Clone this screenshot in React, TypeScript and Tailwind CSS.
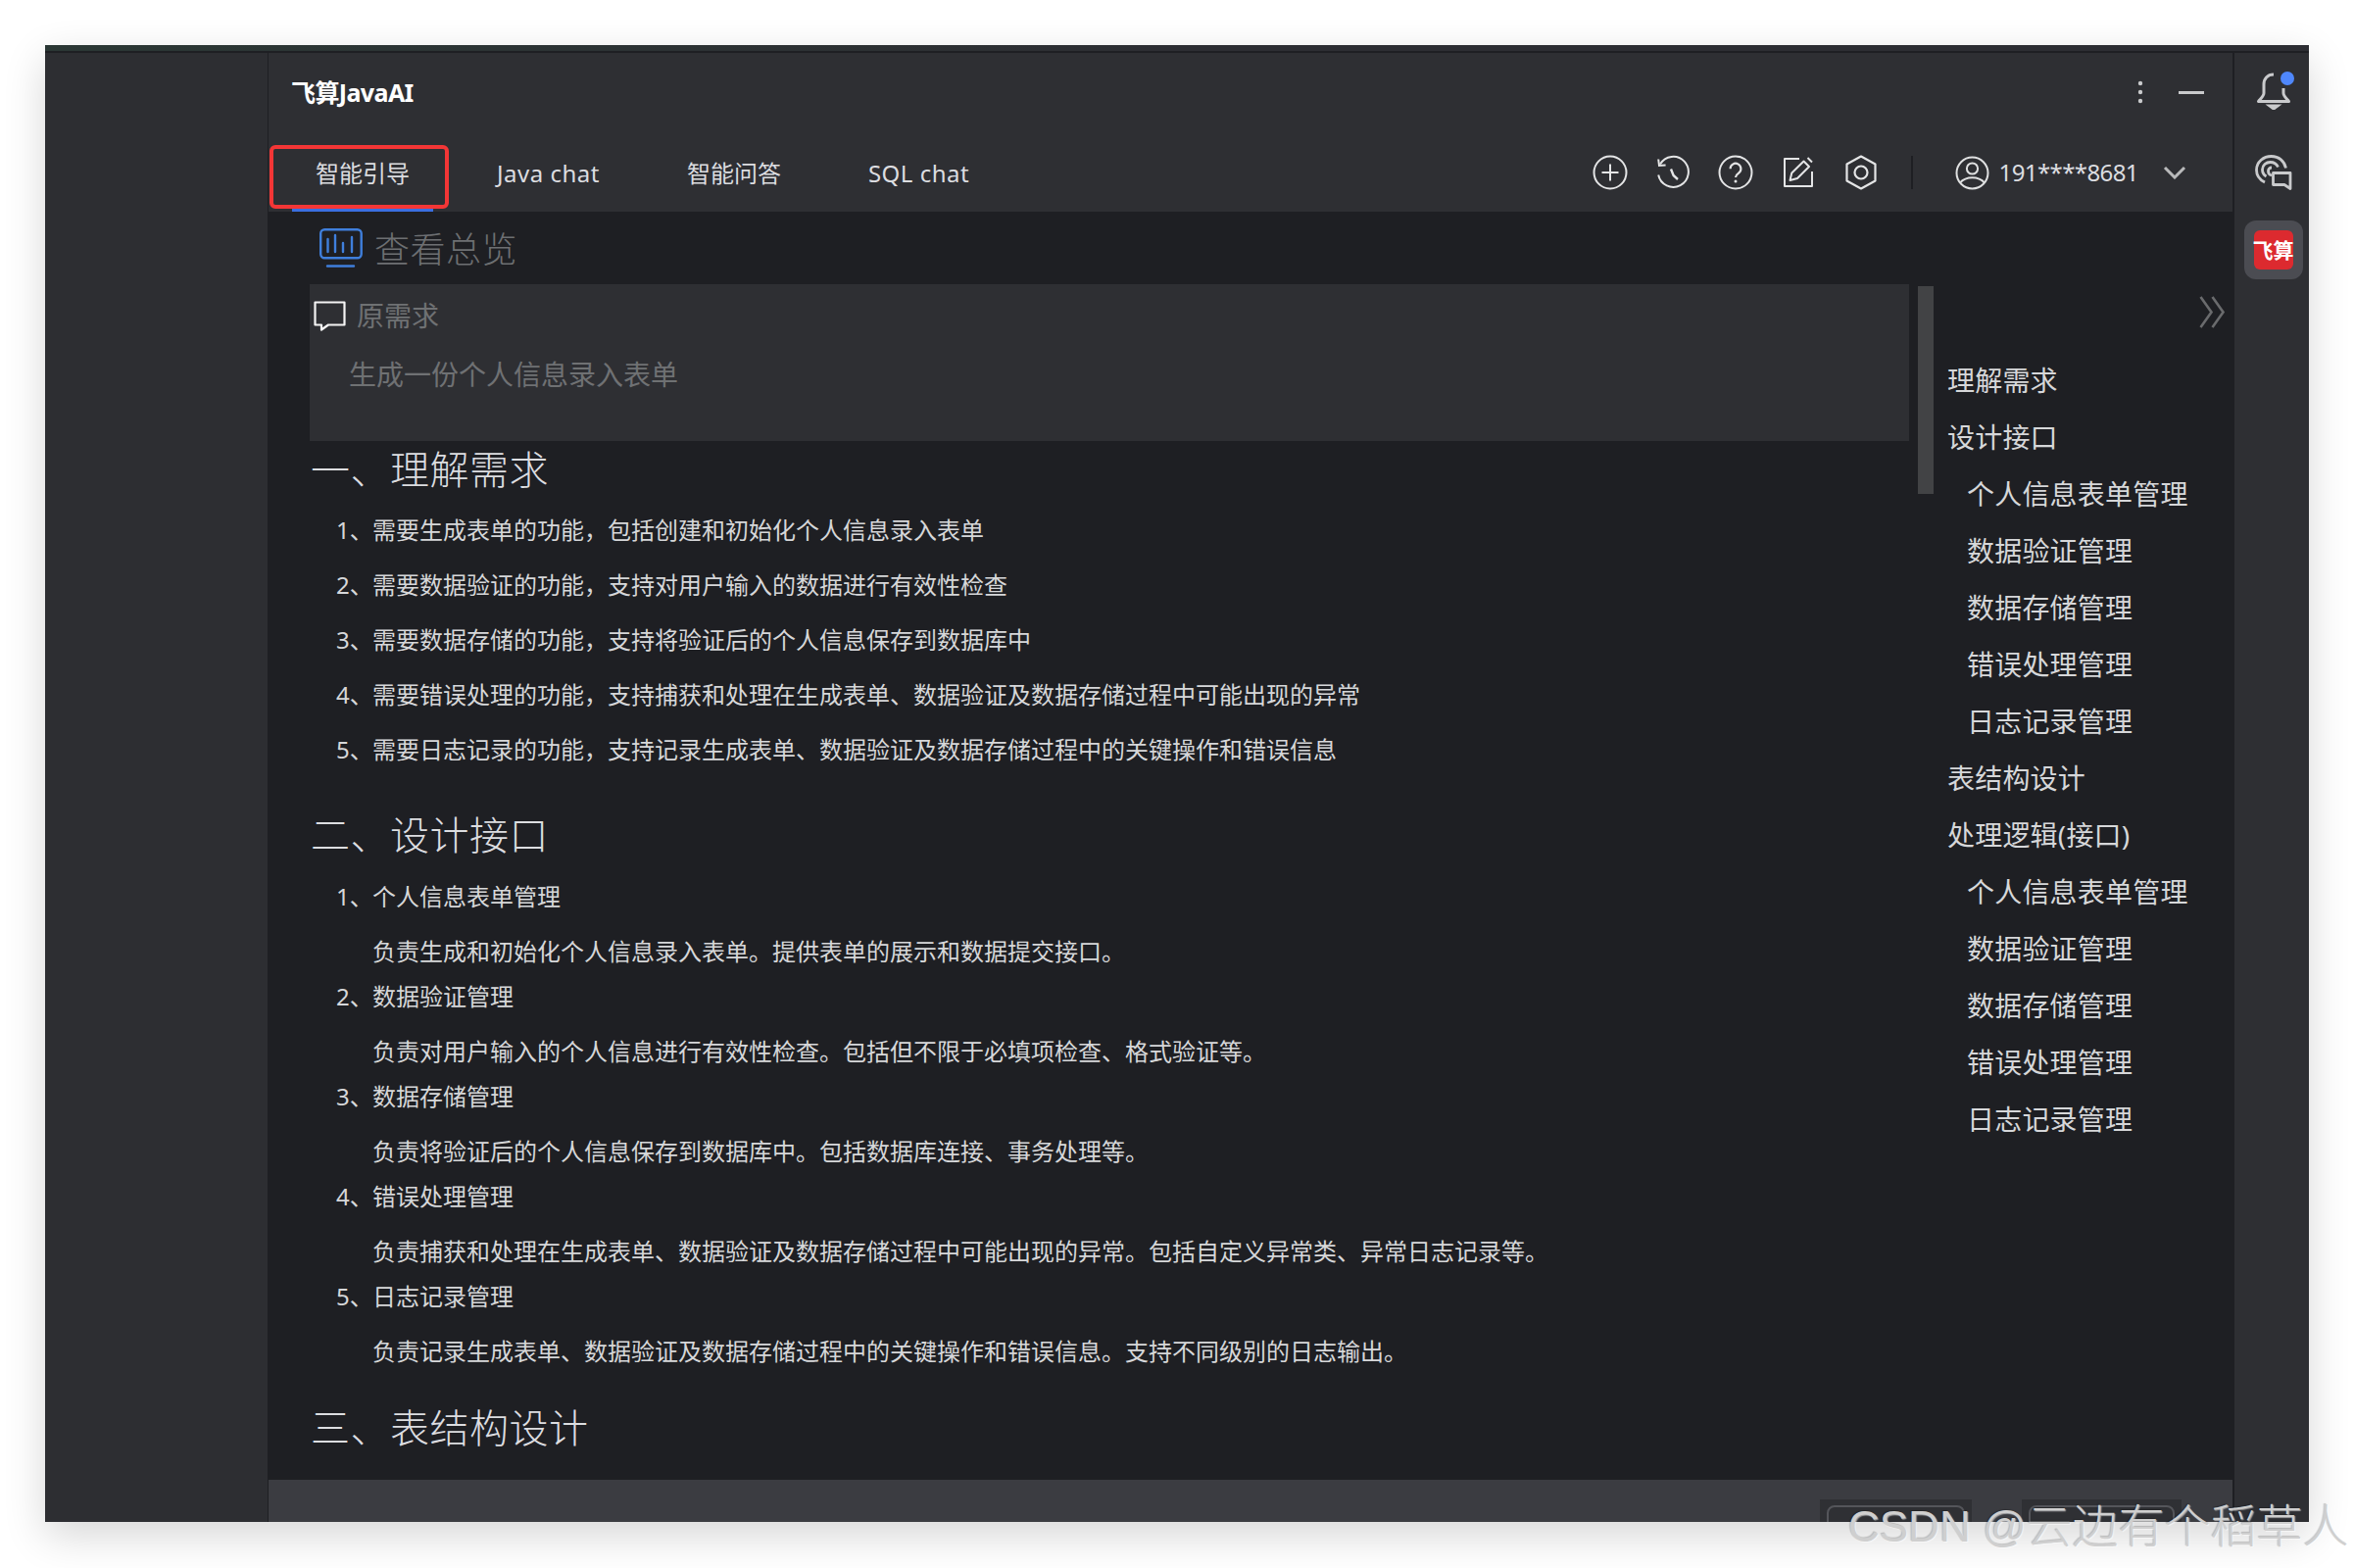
import React from "react";

const sans = "font-['Noto_Sans','Noto_Sans_CJK_SC',sans-serif]";

const listOne = [
  "需要生成表单的功能，包括创建和初始化个人信息录入表单",
  "需要数据验证的功能，支持对用户输入的数据进行有效性检查",
  "需要数据存储的功能，支持将验证后的个人信息保存到数据库中",
  "需要错误处理的功能，支持捕获和处理在生成表单、数据验证及数据存储过程中可能出现的异常",
  "需要日志记录的功能，支持记录生成表单、数据验证及数据存储过程中的关键操作和错误信息",
];

const listTwo = [
  ["个人信息表单管理", "负责生成和初始化个人信息录入表单。提供表单的展示和数据提交接口。"],
  ["数据验证管理", "负责对用户输入的个人信息进行有效性检查。包括但不限于必填项检查、格式验证等。"],
  ["数据存储管理", "负责将验证后的个人信息保存到数据库中。包括数据库连接、事务处理等。"],
  ["错误处理管理", "负责捕获和处理在生成表单、数据验证及数据存储过程中可能出现的异常。包括自定义异常类、异常日志记录等。"],
  ["日志记录管理", "负责记录生成表单、数据验证及数据存储过程中的关键操作和错误信息。支持不同级别的日志输出。"],
];

const outline: [string, number][] = [
  ["理解需求", 1],
  ["设计接口", 1],
  ["个人信息表单管理", 2],
  ["数据验证管理", 2],
  ["数据存储管理", 2],
  ["错误处理管理", 2],
  ["日志记录管理", 2],
  ["表结构设计", 1],
  ["处理逻辑(接口)", 1],
  ["个人信息表单管理", 2],
  ["数据验证管理", 2],
  ["数据存储管理", 2],
  ["错误处理管理", 2],
  ["日志记录管理", 2],
];

function Tab({ label, latin }: { label: string; latin?: boolean }) {
  return (
    <div className={latin ? "px-6 h-[68px] flex items-center text-[24px] text-[#dcdde0] pb-[10px] whitespace-nowrap tracking-[0.5px]" : "px-6 h-[68px] flex items-center text-[24px] text-[#dcdde0] pb-[10px] whitespace-nowrap"}>
      {label}
    </div>
  );
}

function HeaderIcons() {
  return (
    <div className="flex items-center text-[#e4e5e6]">
      <div className="w-16 flex justify-center">
        <svg width="36" height="36" viewBox="0 0 36 36" fill="none" stroke="currentColor" strokeWidth="2">
          <circle cx="18" cy="18" r="16.5" />
          <path d="M18 9.5v17M9.5 18h17" />
        </svg>
      </div>
      <div className="w-16 flex justify-center">
        <svg width="36" height="36" viewBox="0 0 36 36" fill="none" stroke="currentColor" strokeWidth="2">
          <path d="M5 9.5 A15.5 15.5 0 1 1 3.2 20.5" />
          <path d="M3.2 4.5 L4 11 L10.6 10.4" />
          <path d="M16 14.5 L18.6 21 L23 25" strokeWidth="2.4" />
        </svg>
      </div>
      <div className="w-16 flex justify-center">
        <svg width="36" height="36" viewBox="0 0 36 36" fill="none" stroke="currentColor" strokeWidth="2">
          <circle cx="18" cy="18" r="16.5" />
          <path d="M12.6 14.2a5.4 5.4 0 1 1 8.5 4.4c-2 1.4-3.1 2.2-3.1 4.4" strokeWidth="2.2" />
          <circle cx="18" cy="27" r="1.5" fill="currentColor" stroke="none" />
        </svg>
      </div>
      <div className="w-16 flex justify-center">
        <svg width="32" height="32" viewBox="0 0 32 32" fill="none" stroke="currentColor" strokeWidth="2">
          <path d="M17 2H2v28h28V15" strokeLinejoin="round" />
          <path d="M7.5 24l1.8-7.5L21.5 4.5l5.5 5.5L15 22z" strokeLinejoin="round" />
          <path d="M25.5 1l4.5 4.5" />
        </svg>
      </div>
      <div className="w-16 flex justify-center">
        <svg width="32" height="36" viewBox="0 0 32 36" fill="none" stroke="currentColor" strokeWidth="2.2">
          <path d="M16 1.5 30.5 9.5v17L16 34.5 1.5 26.5v-17z" strokeLinejoin="round" />
          <circle cx="16" cy="18" r="6.5" />
        </svg>
      </div>
    </div>
  );
}

function Bullet({ n, text }: { n: number; text: string }) {
  return (
    <div className="flex items-center h-full pb-[3px]">
      <span className="w-[37px] shrink-0 whitespace-nowrap">{n}、</span>
      <span className="whitespace-nowrap">{text}</span>
    </div>
  );
}

export default function App() {
  return (
    <div className={`relative w-[2402px] h-[1600px] bg-white pt-[46px] pl-[46px] overflow-hidden ${sans}`}>
      <div className="w-[2310px] h-[1507px] flex flex-col overflow-hidden shadow-[0_14px_40px_rgba(0,0,0,0.16)] bg-[#2d2e32]">
        <div className="h-[6px] shrink-0 bg-gradient-to-r from-[#2b3835] via-[#2d2e33] to-[#2d2e33]" />
        <div className="h-[2px] shrink-0 bg-[#1e1f23]" />
        <div className="flex flex-1 min-h-0">
          {/* left empty sidebar */}
          <div className="w-[227px] shrink-0 bg-[#2d2e32]" />
          <div className="w-[1px] shrink-0 bg-[#1e1f23]" />

          {/* main */}
          <div className="flex flex-col w-[2004px] shrink-0 min-w-0">
            <div className="h-[162px] shrink-0 bg-[#2e2f33] flex flex-col">
              <div className="h-[94px] flex items-start justify-between pl-[23px] pr-[29px]">
                <div className="mt-[23px] h-[36px] flex items-center text-[25px] font-bold text-white tracking-[-0.6px] whitespace-nowrap">飞算JavaAI</div>
                <div className="flex items-center mt-[28px] gap-[36px]">
                  <svg width="6" height="24" viewBox="0 0 6 24" fill="#c9cacc">
                    <circle cx="3" cy="3" r="2.2" />
                    <circle cx="3" cy="12" r="2.2" />
                    <circle cx="3" cy="21" r="2.2" />
                  </svg>
                  <div className="w-[26px] h-[3px] bg-[#c9cacc]" />
                </div>
              </div>
              <div className="flex-1 flex items-start justify-between">
                <div className="flex gap-[41px] ml-[24px]">
                  <div className="relative">
                    <Tab label="智能引导" />
                    <div className="absolute left-0 right-0 bottom-0 h-[4px] bg-[#3a6fe0]" />
                  </div>
                  <Tab label="Java chat" latin />
                  <Tab label="智能问答" />
                  <Tab label="SQL chat" latin />
                </div>
                <div className="flex items-center mt-[10px] h-[36px] pr-[47px]">
                  <HeaderIcons />
                  <div className="w-[2px] h-[34px] bg-[#1e1f23] ml-[19px] mr-[43px]" />
                  <svg width="35" height="35" viewBox="0 0 35 35" fill="none" stroke="#dfe0e1" strokeWidth="2" className="shrink-0">
                    <circle cx="17.5" cy="17.5" r="16" />
                    <circle cx="17.5" cy="13" r="5.6" />
                    <path d="M5 27.5c3.2-3.6 7.5-5.2 12.5-5.2s9.300 1.600 12.500 5.200" />
                  </svg>
                  <span className="ml-[10px] text-[24px] text-[#dcdde0] tracking-[-0.6px] whitespace-nowrap">191****8681</span>
                  <svg width="24" height="14" viewBox="0 0 24 14" fill="none" stroke="#b9babb" strokeWidth="3" className="ml-[25px] shrink-0">
                    <path d="M2 2l10 10L22 2" />
                  </svg>
                </div>
              </div>
            </div>

            <div className="flex flex-1 min-h-0 bg-[#1e1f23]">
              <div className="w-[1684px] shrink-0 pl-[42px] flex flex-col text-[24px] text-[#d6d7d9]">
                <div className="h-[74px] shrink-0 flex items-center pl-[10px]">
                  <svg width="44" height="40" viewBox="0 0 44 40" fill="none" stroke="#3f7fdc" strokeWidth="2.4" className="shrink-0">
                    <rect x="1.200" y="1.200" width="41.500" height="29" rx="4" />
                    <path d="M8.500 11v13M16 7v17M24 15v9M33 9v15M8 38.500h27" strokeLinecap="round" />
                  </svg>
                  <span className="ml-[12px] pt-[3px] text-[36px] tracking-[0.5px] text-[#6d6f72] font-light whitespace-nowrap">查看总览</span>
                </div>

                <div className="w-[1632px] h-[160px] shrink-0 bg-[#2e2f33] flex flex-col text-[#6f7173] text-[28px]">
                  <div className="flex items-center h-[66px] pl-[4px]">
                    <svg width="33" height="31" viewBox="0 0 33 31" fill="none" stroke="#f4f4f4" strokeWidth="2.200" className="shrink-0 mb-[2px]" strokeLinejoin="round">
                      <path d="M1.500 1.500h30v23H15L8 29.500v-5H1.500z" />
                    </svg>
                    <span className="ml-[11px] pb-[3px] whitespace-nowrap text-[#6f7173]">原需求</span>
                  </div>
                  <div className="pl-[40px] h-[54px] pb-[3px] flex items-center whitespace-nowrap">生成一份个人信息录入表单</div>
                </div>

                <div className="h-[64px] shrink-0 pb-[6px] flex items-center text-[40px] tracking-[0.5px] text-[#dcdde0] font-light pl-[1px] whitespace-nowrap">一、理解需求</div>

                <div className="flex flex-col pl-[27px]">
                  {listOne.map((t, i) => (
                    <div key={i} className="h-[56px]">
                      <Bullet n={i + 1} text={t} />
                    </div>
                  ))}
                </div>

                <div className="h-[104px] shrink-0 pt-[12px] flex items-center text-[40px] tracking-[0.5px] text-[#dcdde0] font-light pl-[1px] whitespace-nowrap">二、设计接口</div>

                <div className="flex flex-col pl-[27px]">
                  {listTwo.map(([h, d], i) => (
                    <div key={i}>
                      <div className="h-[36px]">
                        <Bullet n={i + 1} text={h} />
                      </div>
                      <div className="h-[66px] pt-[7px] pl-[37px] flex items-center whitespace-nowrap">{d}</div>
                    </div>
                  ))}
                </div>

                <div className="h-[98px] shrink-0 pb-[1px] flex items-center text-[40px] tracking-[0.5px] text-[#dcdde0] font-light pl-[1px] whitespace-nowrap">三、表结构设计</div>
              </div>

              <div className="w-[16px] h-[212px] mt-[76px] shrink-0 ml-[-1px] bg-[#424345]" />

              <div className="flex-1 min-w-0 pt-[86px] flex flex-col">
                <div className="flex justify-end pr-[7px] h-[33px]">
                  <svg width="27" height="33" viewBox="0 0 27 33" fill="none" stroke="#6a6b6d" strokeWidth="2.600">
                    <path d="M1.500 1l11 15.500L1.500 32M13.500 1l11 15.500L13.500 32" />
                  </svg>
                </div>
                <div className="mt-[24px] flex flex-col text-[28px] tracking-[0.2px] text-[#d6d7d9]">
                  {outline.map(([t, lvl], i) => (
                    <div key={i} className={lvl === 1 ? "h-[58px] flex items-center pl-[14px] whitespace-nowrap" : "h-[58px] flex items-center pl-[34px] whitespace-nowrap"}>
                      {t}
                    </div>
                  ))}
                </div>
              </div>
            </div>

            <div className="h-[43px] shrink-0 bg-[#3b3c41] flex justify-end items-start pt-[20px] pr-[52px] gap-[51px]">
              <div className="w-[155px] h-[40px] bg-[#2f3034] px-[7px] pt-[6px] shrink-0">
                <div className="h-[40px] border-2 border-[#54555a] rounded-lg" />
              </div>
              <div className="w-[163px] h-[40px] bg-[#2f3034] px-[7px] pt-[6px] shrink-0">
                <div className="h-[40px] border-2 border-[#54555a] rounded-lg" />
              </div>
            </div>
          </div>

          {/* right rail */}
          <div className="w-[2px] shrink-0 bg-[#1e1f23]" />
          <div className="flex-1 min-w-0 bg-[#2e2f33] flex flex-col items-center pt-[20px] pl-[3px]">
            <div className="relative w-[36px] h-[38px]">
              <svg width="36" height="38" viewBox="0 0 36 38" fill="none" stroke="#c9cacc" strokeWidth="3">
                <path d="M18 2c-6.500 0-10 4.500-10 10v9c0 3-3 5.500-5.500 8.500h31c-2.500-3-5.500-5.500-5.500-8.500v-5" strokeLinejoin="round" />
                <path d="M14 34h8l-4 3z" fill="#c9cacc" />
              </svg>
              <div className="absolute right-[-3px] top-[-1px] w-[14px] h-[14px] rounded-full bg-[#4f87fb]" />
            </div>
            <div className="mt-[46px] w-[38px] h-[36px]">
              <svg width="38" height="36" viewBox="0 0 38 36" fill="none" stroke="#c9cacc" strokeWidth="2.800">
                <path d="M10 28C4 25 1.500 21 1.500 15.500 1.500 7 9 1.500 16.500 1.500c8 0 13.500 5 15 12" />
                <path d="M11.500 22c-2.500-1.500-4-4-4-7 0-4.500 4-7.500 8-7.500 3.500 0 6.500 1.800 8 5" />
                <path d="M17 21c-2-.5-3.500-2-3.500-4.500 0-2 1.500-3.500 3.500-3.500" />
                <path d="M18.500 18.500h17.500v16l-6-4h-11.500z" strokeLinejoin="round" />
              </svg>
            </div>
            <div className="mt-[31px] w-[60px] h-[60px] rounded-xl bg-[#4b4c52] flex items-center justify-center">
              <div className="w-[40px] h-[40px] rounded-md bg-[#dc2a2f] flex items-center justify-center text-[21px] leading-none font-bold text-white whitespace-nowrap">飞算</div>
            </div>
          </div>
        </div>
      </div>

      {/* annotation */}
      <div className="absolute left-[275px] top-[148px] w-[183px] h-[65px] border-[4px] border-[#f33636] rounded-md" />

      {/* watermark */}
      <div className="absolute left-[1886px] top-[1526px] h-[64px] flex items-center whitespace-nowrap font-light font-['Liberation_Sans','Noto_Sans_CJK_SC',sans-serif] text-[47px] text-[#cfcfcf] [text-shadow:1px_1px_1px_rgba(255,255,255,0.55),-1px_-1px_1px_rgba(0,0,0,0.2)]">
        <span className="text-[44px]">CSDN @</span>
        <span>云边有个稻草人</span>
      </div>
    </div>
  );
}
